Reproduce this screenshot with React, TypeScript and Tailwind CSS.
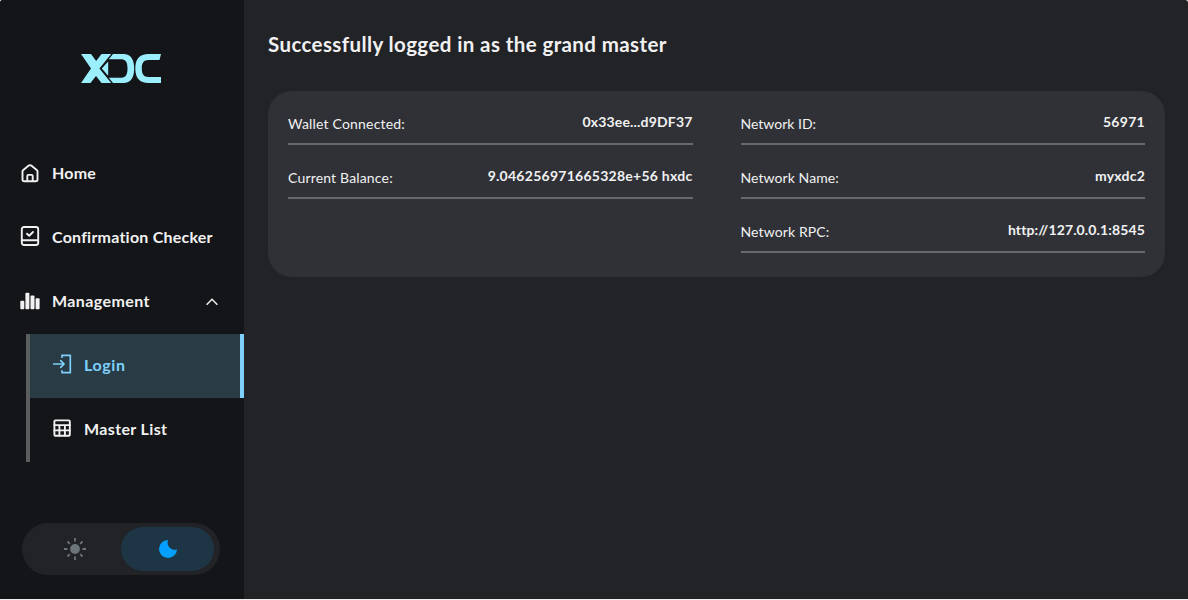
import React from "react";

function Logo() {
  return (
    <svg width="82" height="30" viewBox="0 0 82 30" fill="#9beffd">
      <path d="M1 0H11L16.2 7L21.5 0H31.2L19.4 14.6L31.2 29H21.5L16 22L10.5 29H1L11 14.6Z" />
      <path d="M33 0H43.5C50.5 0 54.2 5 54.2 14.5C54.2 24 50.5 29 43.5 29H33L28.8 23.7H41.5C46 23.7 47.5 20 47.5 14.5C47.5 9 46 5.3 41.5 5.3H28.8Z" />
      <path d="M28.2 7.5V21.7L21.8 14.6Z" />
      <path d="M81 0H68.5C59.5 0 55.3 5 55.3 14.5C55.3 24 59.5 29 68.5 29H81V23H68.5C63.5 23 61.8 20 61.8 14.5C61.8 9 63.5 6 68.5 6H79.5Z" />
    </svg>
  );
}

const stroke = {
  width: 20,
  height: 20,
  viewBox: "0 0 20 20",
  fill: "none",
  stroke: "currentColor",
  strokeWidth: 1.9,
  strokeLinecap: "round" as const,
  strokeLinejoin: "round" as const,
};

const HomeIcon = () => (
  <svg {...stroke}>
    <path d="M2.5 7.6Q2.5 6.6 3.3 5.9L8.7 1.6Q10 .7 11.3 1.6L16.7 5.9Q17.5 6.6 17.5 7.6V15.5Q17.5 17.3 15.7 17.3H4.3Q2.5 17.3 2.5 15.5Z" />
    <path d="M7.3 17V12Q7.3 10.9 8.4 10.9H11.6Q12.7 10.9 12.7 12V17" />
  </svg>
);
const CheckIcon = () => (
  <svg {...stroke}>
    <rect x="1.8" y="1" width="16.4" height="18" rx="2.2" />
    <path d="M2 14.2H18M7 7.7L9.2 9.7L13 6" />
  </svg>
);
const BarsIcon = () => (
  <svg className="-mt-0.5" width="20" height="18" viewBox="0 0 20 18" fill="currentColor">
    <rect x="0.3" y="8.8" width="4" height="8.5" rx="1" />
    <rect x="5.4" y="0.7" width="4" height="16.6" rx="1" />
    <rect x="10.5" y="3.5" width="4" height="13.8" rx="1" />
    <rect x="15.6" y="6.3" width="4" height="11" rx="1" />
  </svg>
);
const LoginIcon = () => (
  <svg {...stroke} strokeWidth={1.7}>
    <path d="M10 3.2V1.3H18.3V18.7H10V16.8M1.7 10H12M8.7 6.6L12.1 10L8.7 13.4" />
  </svg>
);
const TableIcon = () => (
  <svg {...stroke}>
    <rect x="2.4" y="2.4" width="15.4" height="15.4" rx="1" />
    <path d="M2.4 7.1H17.8M2.4 12.4H17.8M7.4 7.1V17.6M12.9 7.1V17.6" />
  </svg>
);

function Row({ label, value, labelTracking, valueTracking }: { label: string; value: string; labelTracking: string; valueTracking: string }) {
  return (
    <div className="flex h-[54px] items-start justify-between border-b-2 border-[#67686c] pt-[21px] text-sm leading-5 text-[#f1f1f2]">
      <span className={`mt-0.5 whitespace-nowrap ${labelTracking}`}>{label}</span>
      <span className={`whitespace-nowrap font-bold ${valueTracking}`}>{value}</span>
    </div>
  );
}

export default function App() {
  return (
    <div className="h-[600px] w-full overflow-hidden bg-[#f0f0f0] pb-px font-[Lato,sans-serif] text-[#f1f1f2]">
      <div className="flex h-[599px] overflow-hidden rounded-t-[3px] bg-[#222327]">
        <aside className="flex w-[244px] shrink-0 flex-col bg-[#141518] text-base font-bold">
          <div className="h-[142px] pt-[54px] pl-20"><Logo /></div>
          <nav>
            <a className="flex h-16 items-center gap-3 pl-5"><HomeIcon /><span className="-mt-0.5 tracking-[0.2px]">Home</span></a>
            <a className="flex h-16 items-center gap-3 pl-5"><span className="-mt-1"><CheckIcon /></span><span className="-mt-0.5 whitespace-nowrap tracking-[0.22px]">Confirmation Checker</span></a>
            <a className="flex h-16 items-center gap-3 pl-5">
              <BarsIcon /><span className="-mt-0.5 tracking-[0.4px]">Management</span>
              <svg className="mr-[26px] ml-auto" width="12" height="8" viewBox="0 0 12 8" fill="none" stroke="currentColor" strokeWidth="1.5"><path d="M.6 6.8L6 1.3L11.4 6.8" /></svg>
            </a>
            <div className="ml-[26px] border-l-4 border-[#5c5d5f]">
              <a className="flex h-16 items-center gap-3 border-r-4 border-[#7dd0fb] bg-[#293b44] pl-[22px] text-[#7dd0fb]"><span className="-mt-1"><LoginIcon /></span><span className="-mt-0.5 tracking-[0.6px]">Login</span></a>
              <a className="flex h-16 items-center gap-3 pl-[22px]"><span className="-mt-1"><TableIcon /></span><span className="-mt-0.5 tracking-[0.36px]">Master List</span></a>
            </div>
          </nav>
          <div className="mt-[61px] ml-[22px] flex h-[52px] w-[198px] items-center rounded-full bg-[#222327] pl-[7px]">
            <div className="flex w-[92px] justify-center">
              <svg width="22" height="22" viewBox="0 0 22 22" stroke="#6c757a" strokeWidth="1.8"><circle cx="11" cy="11" r="4.9" fill="#6c757a" stroke="none" /><path d="M11 0V3.5M11 18.5V22M0 11H3.5M18.5 11H22M3.5 3.5L5.8 5.8M16.2 16.2L18.5 18.5M3.5 18.5L5.8 16.2M16.2 5.8L18.5 3.5" /></svg>
            </div>
            <div className="flex h-11 w-[93px] items-center justify-center rounded-full bg-[#1e3545]">
              <svg width="18" height="18" viewBox="0 0 18 18" fill="#049fff"><path d="M9.2 0A9 9 0 1 0 18 9.2C13 11.5 6.5 5.5 9.2 0Z" /></svg>
            </div>
          </div>
        </aside>
        <main className="min-w-0 flex-1 pt-[30px] pr-[23px] pl-6">
          <h1 className="h-[61px] whitespace-nowrap text-[20.5px] leading-7 font-bold tracking-[0.4px]">Successfully logged in as the grand master</h1>
          <section className="grid h-[186px] grid-cols-2 gap-12 rounded-3xl bg-[#303136] px-5">
            <div>
              <Row label="Wallet Connected:" value="0x33ee...d9DF37" labelTracking="tracking-[0.19px]" valueTracking="tracking-[0.17px]" />
              <Row label="Current Balance:" value="9.046256971665328e+56 hxdc" labelTracking="tracking-[0.17px]" valueTracking="tracking-[0.26px]" />
            </div>
            <div>
              <Row label="Network ID:" value="56971" labelTracking="tracking-[0px]" valueTracking="tracking-[0.3px]" />
              <Row label="Network Name:" value="myxdc2" labelTracking="tracking-[0.08px]" valueTracking="tracking-[0.2px]" />
              <Row label="Network RPC:" value="http://127.0.0.1:8545" labelTracking="tracking-[0.12px]" valueTracking="tracking-[0.13px]" />
            </div>
          </section>
        </main>
      </div>
    </div>
  );
}
